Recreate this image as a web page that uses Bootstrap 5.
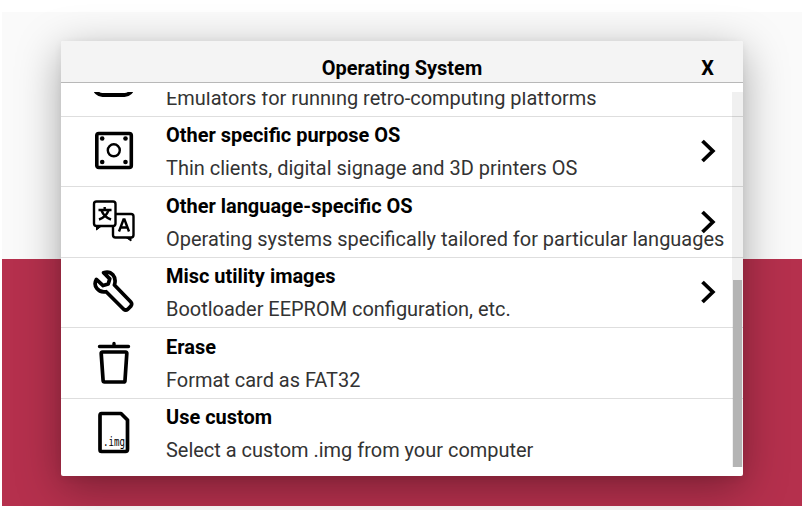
<!DOCTYPE html>
<html lang="en">
<head>
<meta charset="utf-8">
<meta name="viewport" content="width=device-width, initial-scale=1">
<title>Operating System</title>
<link href="https://cdn.jsdelivr.net/npm/bootstrap@5.3.0/dist/css/bootstrap.min.css" rel="stylesheet">
<style>
body{font-family:Roboto,sans-serif;font-size:19.97px;background:#fff;color:#000;width:808px;height:510px;padding:12px 6px 4px 2px;overflow:hidden}
.stage{height:494px;padding:29px 59px 30px;background:linear-gradient(#fafafa 247px,#b5304d 247px)}
.os-dialog{height:435px;border-radius:2px;box-shadow:0 11px 44px rgba(0,0,0,.34),0 2px 9px rgba(0,0,0,.06);background:#fff}
.os-head{height:42px;line-height:30px;background:#f4f4f4;border-bottom:1px solid #b8b8b8;padding-top:12px;border-radius:2px 2px 0 0}
.os-close{width:71px;flex:none}
.os-title{padding-left:71px}
.os-list{height:377px;margin-top:9px}
.os-row{height:70.6px;flex:none;border-bottom:1px solid #dedede;padding-top:2.3px}
.os-row-end{border-bottom-color:transparent}
.os-rows{height:377.6px}
.os-icon{width:105px;flex:none;padding-left:30px;margin-top:-3px}
.os-text{line-height:33px;white-space:nowrap;width:517px;flex:none}
.os-desc{color:#333}
.os-desc-end{padding-bottom:2px}
.os-icon svg,.os-arrow svg{display:block;fill:none;stroke:#000}
.os-arrow{margin-top:-3px;padding-left:17px}
.os-track{width:11px;background:rgba(0,0,0,.06);right:0;top:0;height:375px}
.os-thumb{width:9px;height:187px;background:#b4b4b4}
.img-label{font:13px "DejaVu Sans Mono",monospace;fill:#000;stroke:none}
</style>
</head>
<body>
<main class="stage">
<section class="os-dialog">
<header class="os-head d-flex fw-bold text-center">
<div class="os-title flex-grow-1">Operating System</div><div class="os-close">X</div>
</header>
<div class="os-list position-relative overflow-hidden">
<div class="os-rows d-flex flex-column justify-content-end">
<div class="os-row d-flex">
<div class="os-icon align-self-center"><svg width="46" height="46" stroke-width="4"><rect x="3.500" y="5" width="38" height="33" rx="8"/></svg></div>
<div class="os-text d-flex align-items-end"><div class="os-desc os-desc-end lh-base">Emulators for running retro-computing platforms</div></div>
</div>
<div class="os-row d-flex">
<div class="os-icon align-self-center"><svg width="46" height="46" stroke-width="3.6"><g transform="translate(0 .5)"><rect x="5.8" y="5" width="34.5" height="34" rx="2"/><circle cx="22.8" cy="21.8" r="6" stroke-width="2.4"/><g fill="#000" stroke="none"><circle cx="11.2" cy="10" r="2.3"/><circle cx="34.5" cy="10" r="2.3"/><circle cx="11.2" cy="33.500" r="2.3"/><circle cx="34.5" cy="33.500" r="2.3"/></g></g></svg></div>
<div class="os-text"><div class="fw-bold">Other specific purpose OS</div><div class="os-desc">Thin clients, digital signage and 3D printers OS</div></div>
<div class="os-arrow align-self-center"><svg width="24" height="24" stroke-width="3.8"><path d="M2.5 2 12.8 12l-10.300 10"/></svg></div>
</div>
<div class="os-row d-flex">
<div class="os-icon align-self-center"><svg width="46" height="46" stroke-width="2.4"><g transform="translate(0 -2)"><rect x="3" y="4.5" width="21.5" height="24.5" rx="2.5"/><path d="M24.5 17H40q2.5 0 2.5 2.5V38q0 2.500-2.500 2.500H24.500q-2.500 0-2.500-2.500V29"/><path d="M5.500 29v4l5-4zM35 40.500l5 3.500v-3.500z" fill="#000" stroke-width="1"/><path d="M7.500 13h13M13.700 10v3M10.500 13.500q2.500 6.500 9.500 9M17.500 13.500q-2.500 6.500-9.500 9" stroke-width="2.400"/><path d="M28 34.500l4.500-12h1l4.500 12M29.800 30.500h6.500" stroke-width="2.400"/></g></svg></div>
<div class="os-text"><div class="fw-bold">Other language-specific OS</div><div class="os-desc">Operating systems specifically tailored for particular languages</div></div>
<div class="os-arrow align-self-center"><svg width="24" height="24" stroke-width="3.8"><path d="M2.5 2 12.8 12l-10.300 10"/></svg></div>
</div>
<div class="os-row d-flex">
<div class="os-icon align-self-center"><svg width="46" height="46" stroke-width="3.600" stroke-linejoin="round"><path transform="translate(-.8 -1.500) scale(1.030)" d="M13 5 19 11l-1.500 5-5 1.500-6.500-6C2.500 17.500 7.500 25 15.500 23.500L32.500 40.500q2 1.500 4 0l3-3q1.500-2 0-4L23.500 17C26 9 20.500 2.500 13 5z"/></svg></div>
<div class="os-text"><div class="fw-bold">Misc utility images</div><div class="os-desc">Bootloader EEPROM configuration, etc.</div></div>
<div class="os-arrow align-self-center"><svg width="24" height="24" stroke-width="3.8"><path d="M2.5 2 12.8 12l-10.300 10"/></svg></div>
</div>
<div class="os-row d-flex">
<div class="os-icon align-self-center"><svg width="46" height="46" stroke-width="3.700" stroke-linejoin="round"><g transform="translate(0 -1)"><path d="M11.500 13h23q1.500 0 1.300 1.500L34 41.500q0 1.500-1.500 1.500h-19q-1.300 0-1.400-1.500L10.200 14.500Q10.100 13 11.500 13z"/><path d="M8.500 7.500h29M23 6.500V4.500" stroke-linecap="round" stroke-width="3.400"/></g></svg></div>
<div class="os-text"><div class="fw-bold">Erase</div><div class="os-desc">Format card as FAT32</div></div>
</div>
<div class="os-row os-row-end d-flex">
<div class="os-icon align-self-center"><svg width="46" height="46" stroke-width="3.700" stroke-linejoin="round"><path d="M10.500 3.500H30l6.500 6.500v29q0 2.500-2 2.500h-24q-1.500 0-1.500-2V5.500q0-2 1.500-2z"/><text class="img-label" x="12" y="35.500" textLength="22" lengthAdjust="spacingAndGlyphs">.img</text></svg></div>
<div class="os-text"><div class="fw-bold">Use custom</div><div class="os-desc">Select a custom .img from your computer</div></div>
</div>
</div>
<div class="os-track position-absolute d-flex align-items-end justify-content-center"><div class="os-thumb"></div></div>
</div>
</section>
</main>
<script src="https://cdn.jsdelivr.net/npm/bootstrap@5.3.0/dist/js/bootstrap.bundle.min.js"></script>
</body>
</html>
